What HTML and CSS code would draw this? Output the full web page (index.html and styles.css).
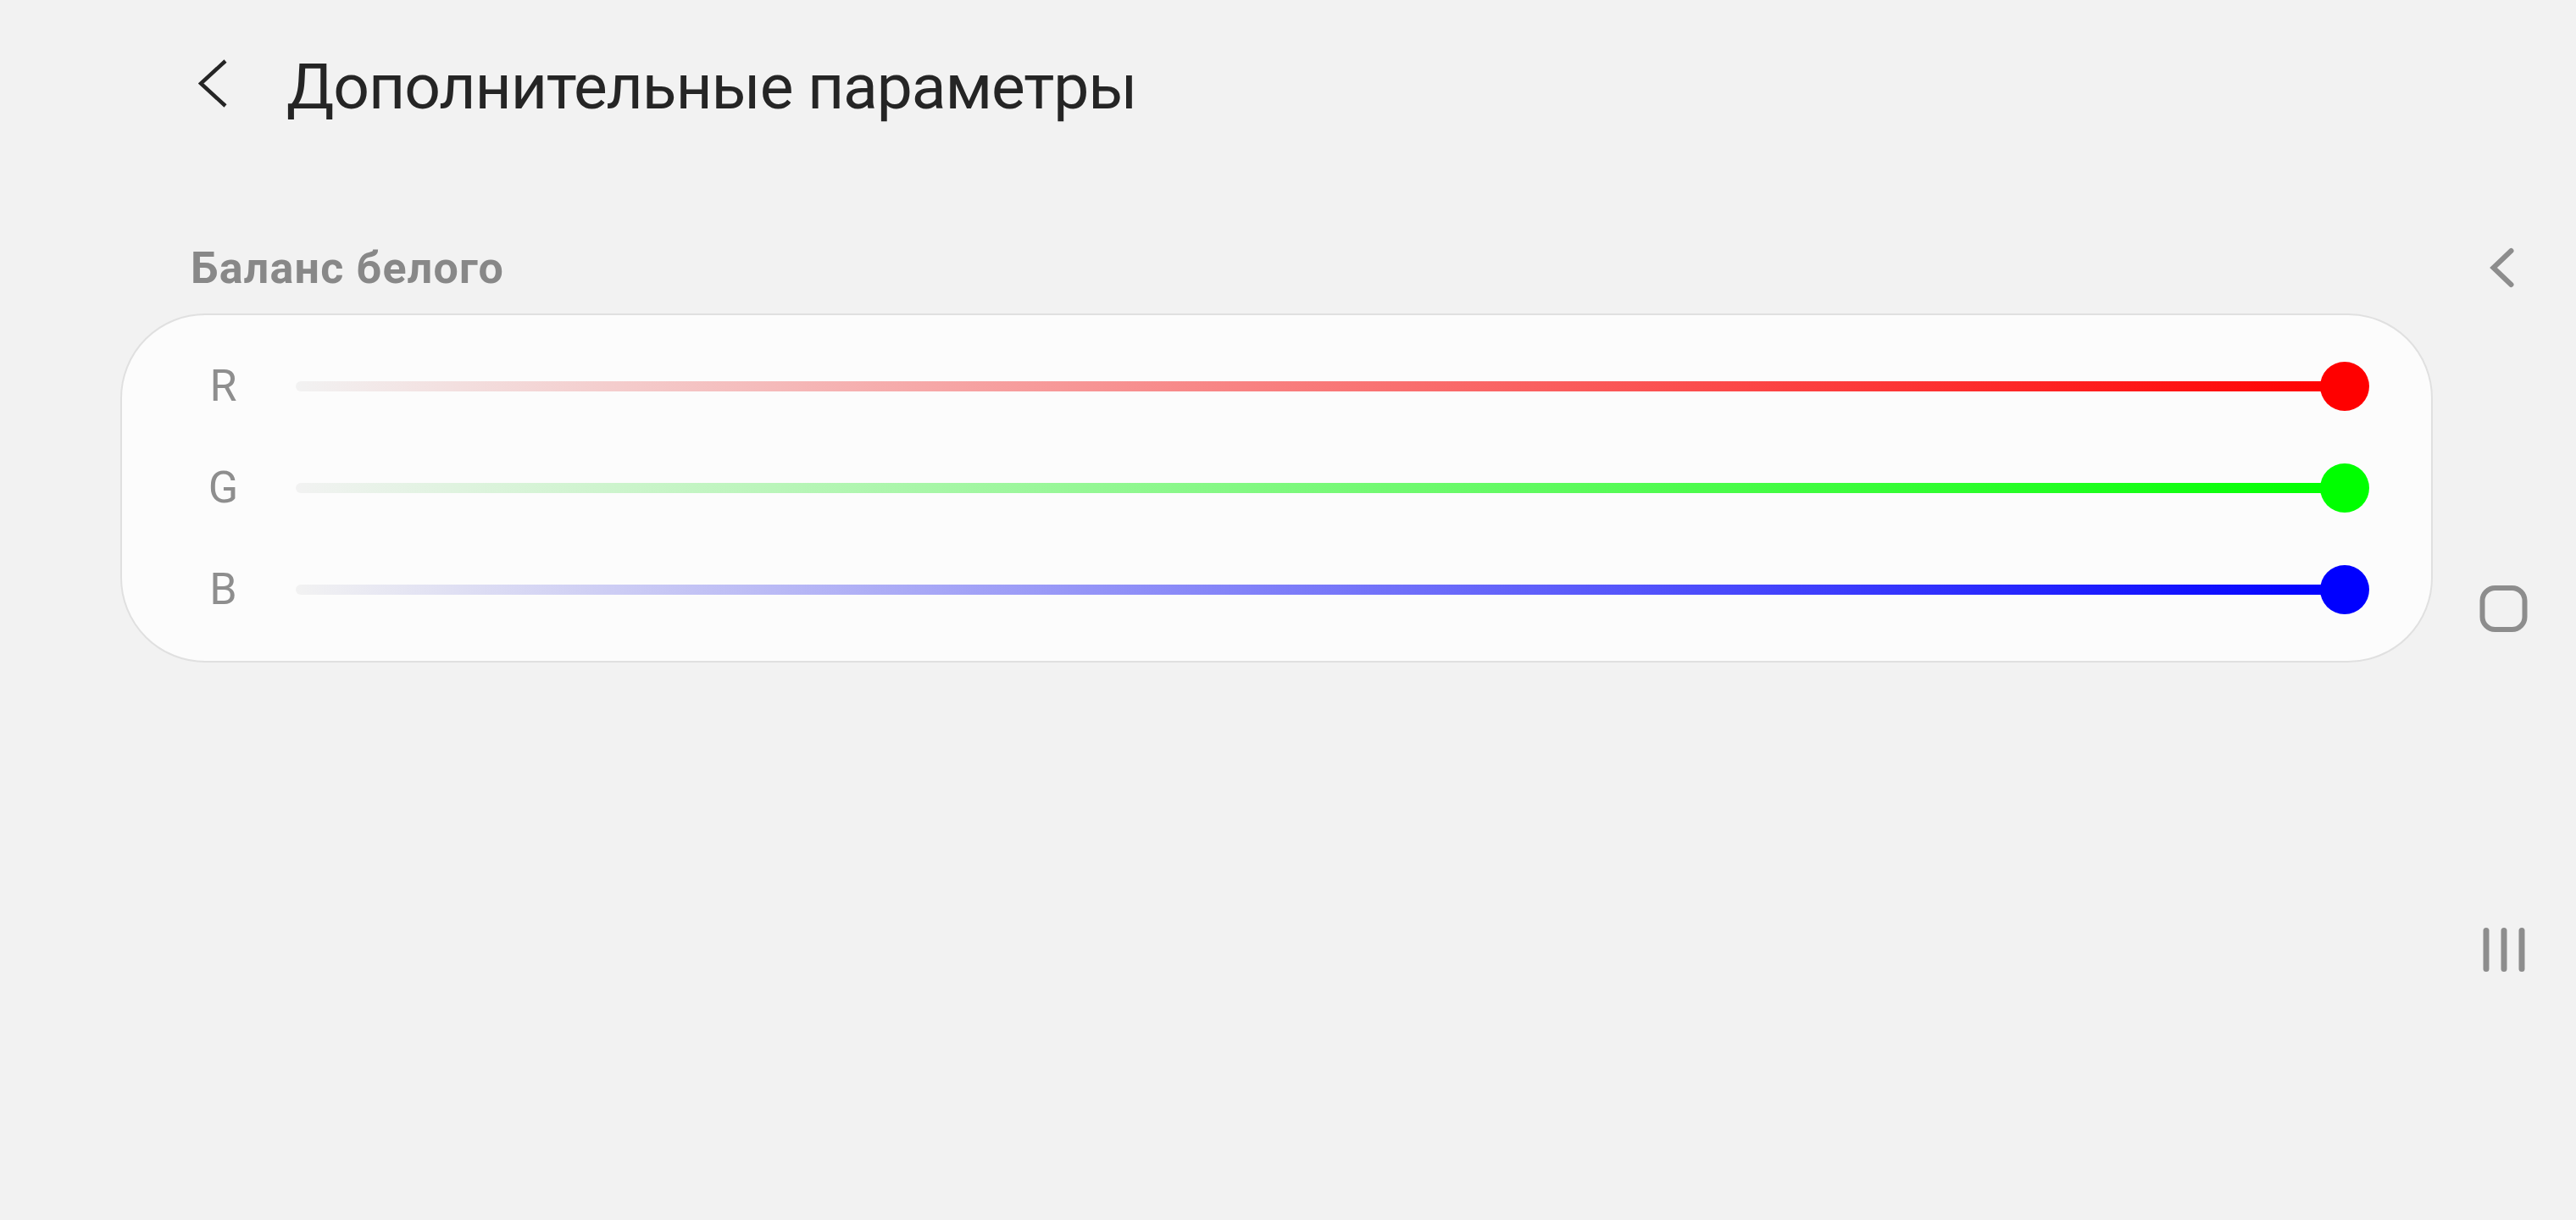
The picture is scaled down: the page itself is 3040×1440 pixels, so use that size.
FILE: index.html
```html
<!DOCTYPE html>
<html lang="ru">
<head>
    <meta charset="UTF-8">
    <meta name="viewport" content="width=device-width, initial-scale=1.0">
    <title>Дополнительные параметры</title>
    <link rel="stylesheet" href="styles.css">
</head>
<body>
    <div class="screen">
        <main class="content">
            <header class="topbar">
                <button class="back-btn" aria-label="Назад">
                    <svg width="36" height="60" viewBox="0 0 36 60">
                        <polyline points="32,4 3,30.5 32,57" fill="none" stroke="#252525" stroke-width="4.5"/>
                    </svg>
                </button>
                <h1 class="title">Дополнительные параметры</h1>
            </header>

            <h2 class="section-title">Баланс белого</h2>

            <section class="card">
                <div class="row">
                    <span class="channel">R</span>
                    <div class="slider slider-r">
                        <div class="track"></div>
                        <div class="thumb"></div>
                    </div>
                </div>
                <div class="row">
                    <span class="channel">G</span>
                    <div class="slider slider-g">
                        <div class="track"></div>
                        <div class="thumb"></div>
                    </div>
                </div>
                <div class="row">
                    <span class="channel">B</span>
                    <div class="slider slider-b">
                        <div class="track"></div>
                        <div class="thumb"></div>
                    </div>
                </div>
            </section>
        </main>

        <nav class="navbar">
            <div class="nav-item">
                <svg width="40" height="60" viewBox="0 0 40 60">
                    <polyline points="27.5,10 6.5,30 27.5,50" fill="none" stroke="#8d8d8d" stroke-width="6" stroke-linecap="round"/>
                </svg>
            </div>
            <div class="nav-item">
                <svg width="60" height="60" viewBox="0 0 60 60">
                    <rect x="3.5" y="6" width="50" height="49" rx="15" fill="none" stroke="#8d8d8d" stroke-width="6"/>
                </svg>
            </div>
            <div class="nav-item">
                <svg width="60" height="60" viewBox="0 0 60 60">
                    <g stroke="#8d8d8d" stroke-width="7" stroke-linecap="round">
                        <line x1="8" y1="8.5" x2="8" y2="53.5"/>
                        <line x1="29" y1="8.5" x2="29" y2="53.5"/>
                        <line x1="50" y1="8.5" x2="50" y2="53.5"/>
                    </g>
                </svg>
            </div>
        </nav>
    </div>
</body>
</html>
```

FILE: styles.css
```css
body {
    margin: 0;
    background: #f2f2f2;
    font-family: Roboto, "Noto Sans", sans-serif;
}

.screen {
    display: flex;
    width: 3040px;
    height: 1440px;
}

.content {
    flex: 1;
    padding-left: 142px;
}

/* шапка */
.topbar {
    display: flex;
    align-items: flex-start;
    height: 100px;
    margin-top: 52px;
    padding-left: 92px;
}

.back-btn {
    background: none;
    border: none;
    padding: 0;
    margin-top: 16px;
    width: 36px;
    height: 60px;
    cursor: pointer;
}

.back-btn svg {
    display: block;
}

.title {
    margin: 0 0 0 68px;
    font-size: 75px;
    font-weight: 400;
    line-height: 100px;
    letter-spacing: -1.1px;
    color: #252525;
}

.section-title {
    margin: 139px 0 27px 0;
    padding-left: 83px;
    font-size: 52px;
    font-weight: 700;
    line-height: 52px;
    letter-spacing: 1.2px;
    color: #888888;
}

/* карточка с ползунками */
.card {
    background: #fcfcfc;
    border: 2px solid #e0e0e0;
    border-radius: 100px;
    padding: 24px 73px 24px 92px;
}

.row {
    display: flex;
    align-items: center;
    height: 120px;
}

.channel {
    width: 55px;
    margin-right: 58px;
    text-align: center;
    font-size: 52px;
    line-height: 52px;
    color: #8e8e8e;
}

.slider {
    flex: 1;
    position: relative;
    height: 58px;
    display: flex;
    align-items: center;
}

.track {
    width: calc(100% - 29px);
    height: 12px;
    border-radius: 6px;
}

.thumb {
    position: absolute;
    right: 0;
    top: 0;
    width: 58px;
    height: 58px;
    border-radius: 50%;
}

.slider-r .track { background: linear-gradient(to right, #f2f2f2, #ff0000); }
.slider-r .thumb { background: #ff0000; }

.slider-g .track { background: linear-gradient(to right, #f2f2f2, #00ff00); }
.slider-g .thumb { background: #00ff00; }

.slider-b .track { background: linear-gradient(to right, #f2f2f2, #0000ff); }
.slider-b .thumb { background: #0000ff; }

/* системная панель навигации */
.navbar {
    width: 169px;
    box-sizing: border-box;
    padding: 115px 0 119px 0;
    display: flex;
    flex-direction: column;
}

.nav-item {
    flex: 1;
    display: flex;
    align-items: center;
    justify-content: center;
}

.nav-item svg {
    display: block;
}
```
